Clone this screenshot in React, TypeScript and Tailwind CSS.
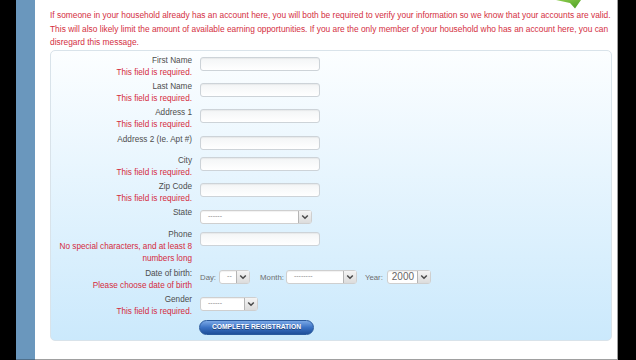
import React from "react";

const Chevron = () => (
  <svg width="8" height="6" viewBox="0 0 8 6">
    <polyline points="1.2,1.5 4,4.3 6.8,1.5" fill="none" stroke="#4a4a4a" strokeWidth="1.5" />
  </svg>
);

function Select({ w, text, big }: { w: string; text: string; big?: boolean }) {
  return (
    <div className={`${w} shrink-0 h-[14px] mt-[2px] flex items-stretch rounded-[3px] border border-[#cfcfcf] bg-white shadow-[inset_0_1px_1px_rgba(0,0,0,0.06)]`}>
      <div className={`flex-1 flex items-center ${big ? "text-[10px] text-[#666] pl-[4px]" : "text-[7px] text-[#888] pl-[7px]"}`}>{text}</div>
      <div className="w-[13px] flex items-center justify-center border-l border-[#b5b5b5] bg-gradient-to-b from-[#f4f4f4] to-[#dcdcdc]">
        <Chevron />
      </div>
    </div>
  );
}

function Input() {
  return (
    <div className="w-[120px] h-[14px] mt-[2px] rounded-[3px] border border-[#cdd3d8] bg-gradient-to-b from-[#f3f5f6] to-white shadow-[inset_0_1px_1px_rgba(0,0,0,0.05)]" />
  );
}

function Row({ h, label, errors, children }: { h: string; label: string; errors?: string[]; children: React.ReactNode }) {
  return (
    <div className={`flex ${h}`}>
      <div className="w-[141px] text-right leading-[12px]">
        <div className="text-[#4d4d4d]">{label}</div>
        {errors?.map((e, i) => (
          <div key={i} className="text-[#d42a3c]">{e}</div>
        ))}
      </div>
      <div className="ml-[8px] flex items-start">{children}</div>
    </div>
  );
}

export default function App() {
  return (
    <div className="flex h-[360px] w-[636px] overflow-hidden bg-black font-['Liberation_Sans',Arial,sans-serif] text-[8.2px]">
      <div className="w-[16px] shrink-0 bg-black" />
      <div className="w-[19px] shrink-0 bg-[#6a97bd] border-b border-[#4f6f8a]" />
      <div className="relative w-[583px] shrink-0 bg-white border-r border-b border-[#a0a0a0] pl-[15px]">
        <svg className="absolute left-[519px] top-0" width="30" height="10" viewBox="0 0 30 10">
          <defs>
            <linearGradient id="g" x1="0" y1="0" x2="1" y2="1">
              <stop offset="0" stopColor="#8ccc4c" />
              <stop offset="1" stopColor="#4c9e22" />
            </linearGradient>
          </defs>
          <path d="M2 0 L27 0 L21 8.5 L16 3 Z" fill="url(#g)" />
        </svg>
        <p className="w-[566px] pt-[9px] leading-[13.5px] text-[8.4px] text-[#d42f42]">
          If someone in your household already has an account here, you will both be required to verify your information so we know that your accounts are valid. This will also likely limit the amount of available earning opportunities. If you are the only member of your household who has an account here, you can disregard this message.
        </p>
        <div className="w-[562px] h-[291px] rounded-[5px] border border-[#d9e3ea] bg-gradient-to-b from-[#fcfeff] to-[#cbe9fc] pt-[4px]">
          <Row h="h-[26px]" label="First Name" errors={["This field is required."]}><Input /></Row>
          <Row h="h-[26px]" label="Last Name" errors={["This field is required."]}><Input /></Row>
          <Row h="h-[27px]" label="Address 1" errors={["This field is required."]}><Input /></Row>
          <Row h="h-[21px]" label="Address 2 (Ie. Apt #)"><Input /></Row>
          <Row h="h-[26px]" label="City" errors={["This field is required."]}><Input /></Row>
          <Row h="h-[26px]" label="Zip Code" errors={["This field is required."]}><Input /></Row>
          <Row h="h-[22px]" label="State"><div className="mt-[1px]"><Select w="w-[112px]" text="------" /></div></Row>
          <Row h="h-[39px]" label="Phone" errors={["No special characters, and at least 8", "numbers long"]}><div className="mt-[1px]"><Input /></div></Row>
          <Row h="h-[26px]" label="Date of birth:" errors={["Please choose date of birth"]}>
            <div className="flex items-start text-[#6e6e6e] text-[7.8px]">
              <span className="mt-[4px]">Day:</span>
              <div className="ml-[3px]"><Select w="w-[31px]" text="--" /></div>
              <span className="ml-[10px] mt-[4px]">Month:</span>
              <div className="ml-[2px]"><Select w="w-[71px]" text="--------" /></div>
              <span className="ml-[8px] mt-[4px]">Year:</span>
              <div className="ml-[4px]"><Select w="w-[44px]" text="2000" big /></div>
            </div>
          </Row>
          <Row h="h-[26px]" label="Gender" errors={["This field is required."]}><div className="mt-[1px]"><Select w="w-[58px]" text="------" /></div></Row>
          <div className="ml-[148px] w-[115px] h-[15px] rounded-full border border-[#2a5a9e] bg-gradient-to-b from-[#7aa8e6] via-[#3b72c4] to-[#1f4f9a] flex items-center justify-center text-[6.7px] font-bold text-white [text-shadow:0_1px_0_rgba(0,0,0,0.4)]">
            COMPLETE REGISTRATION
          </div>
        </div>
      </div>
      <div className="flex-1 bg-black" />
    </div>
  );
}
